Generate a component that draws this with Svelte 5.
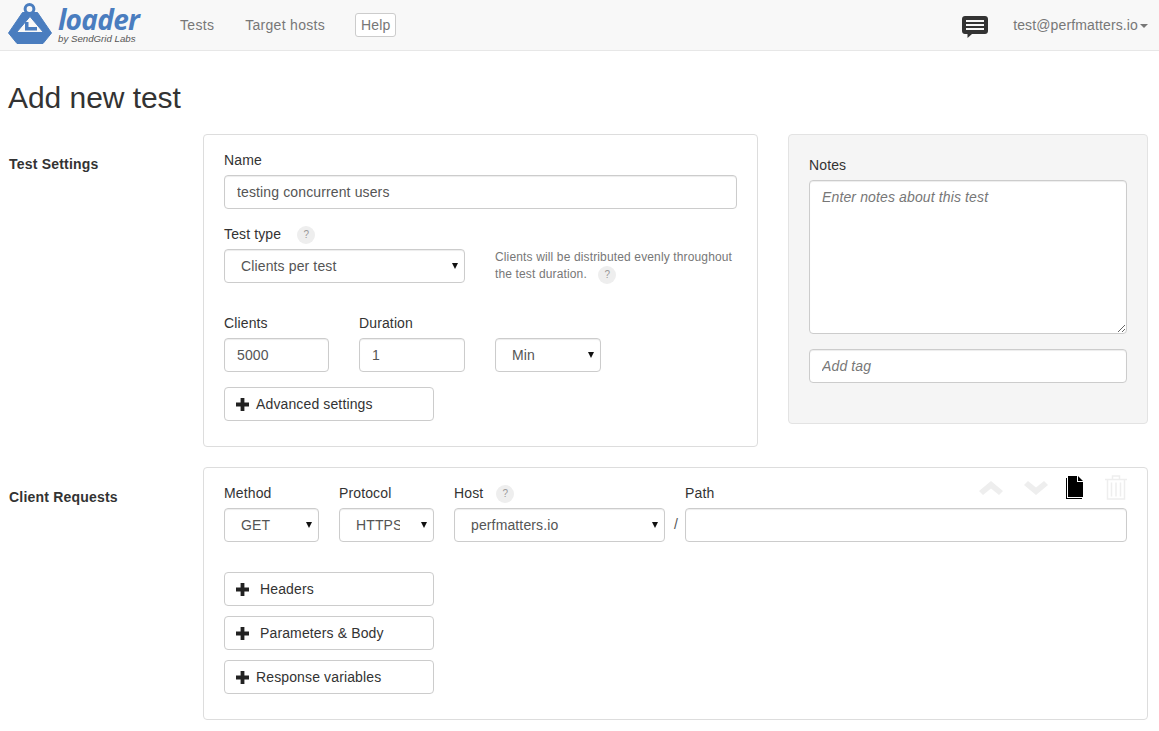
<script lang="ts">
	const plusButtons = [
		{ label: 'Headers', wide: true },
		{ label: 'Parameters & Body', wide: true },
		{ label: 'Response variables', wide: false }
	];
</script>

{#snippet help()}
	<span class="help">?</span>
{/snippet}

{#snippet plus()}
	<svg class="plus" viewBox="0 0 13 13" width="13" height="13" aria-hidden="true">
		<path d="M4.6 0h3.8v4.6H13v3.8H8.4V13H4.6V8.4H0V4.6h4.6z" />
	</svg>
{/snippet}

<header class="navbar">
	<a class="brand" href="#top">
		<svg class="logo" viewBox="8 0 44 46" width="44" height="46" aria-hidden="true">
			<circle cx="29.5" cy="9" r="4.4" fill="none" stroke="#4a7dbf" stroke-width="3" />
			<path
				fill="#4a7dbf"
				fill-rule="evenodd"
				stroke="#4a7dbf"
				stroke-width="1"
				stroke-linejoin="round"
				d="M22.500 12.500h15L51.500 33 43 43.500H17L8.500 33zM30 16.500L16.500 32.500h27z"
			/>
			<path fill="#4a7dbf" d="M25 22h3.500v5H37v3.500H25z" />
		</svg>
		<span class="brand-text">
			<span class="brand-name">loader</span>
			<span class="brand-by">by SendGrid Labs</span>
		</span>
	</a>
	<nav class="nav-links">
		<a href="#tests">Tests</a>
		<a href="#hosts">Target hosts</a>
		<a class="help-link" href="#help">Help</a>
	</nav>
	<div class="nav-right">
		<svg class="chat" viewBox="0 0 26 22" width="26" height="22" aria-hidden="true">
			<path
				fill="#333"
				fill-rule="evenodd"
				d="M3 0h20c1.700 0 3 1.300 3 3v12c0 1.700-1.300 3-3 3H10l-4.500 4v-4H3c-1.700 0-3-1.300-3-3V3c0-1.700 1.300-3 3-3zM4 4v2h18V4zM4 8v2h18V8zM4 12v2h18v-2z"
			/>
		</svg>
		<a class="user" href="#user">test@perfmatters.io<span class="caret"></span></a>
	</div>
</header>

<main class="page">
	<h1>Add new test</h1>

	<section class="row first">
		<h2>Test Settings</h2>
		<div class="settings-cols">
			<div class="card settings">
				<label class="field">
					<span class="label">Name</span>
					<input class="control" type="text" value="testing concurrent users" />
				</label>

				<div class="label type-label">Test type {@render help()}</div>
				<div class="type-row">
					<div class="select type-select">
						<select class="control"><option>Clients per test</option></select>
					</div>
					<p class="hint">
						Clients will be distributed evenly throughout the test duration.
						{@render help()}
					</p>
				</div>

				<div class="load-row">
					<label class="load-field">
						<span class="label">Clients</span>
						<input class="control" type="text" value="5000" />
					</label>
					<label class="load-field">
						<span class="label">Duration</span>
						<input class="control" type="text" value="1" />
					</label>
					<div class="select unit-select">
						<select class="control"><option>Min</option></select>
					</div>
				</div>

				<button class="plus-btn" type="button">{@render plus()}<span>Advanced settings</span></button>
			</div>

			<aside class="well">
				<label class="notes-label" for="notes">Notes</label>
				<textarea id="notes" class="control notes" placeholder="Enter notes about this test"></textarea>
				<input class="control tag" type="text" placeholder="Add tag" />
			</aside>
		</div>
	</section>

	<section class="row">
		<h2>Client Requests</h2>
		<div class="card requests">
			<div class="tools">
				<svg viewBox="0 0 24 14" width="24" height="14" aria-hidden="true">
					<path fill="#eee" d="M12 0l12 10-4 4-8-6.500L4 14l-4-4z" />
				</svg>
				<svg viewBox="0 0 24 14" width="24" height="14" aria-hidden="true">
					<path fill="#eee" d="M12 14L0 4l4-4 8 6.500L20 0l4 4z" />
				</svg>
				<svg class="doc" viewBox="0 0 18 23" width="18" height="23" aria-hidden="true">
					<path fill="#000" d="M2 0h9v6h6v15H2z" />
					<path fill="#000" d="M12 0l5 5h-5zM0 2h1v20h15v1H0z" />
				</svg>
				<svg viewBox="0 0 22 25" width="22" height="25" aria-hidden="true">
					<path
						fill="none"
						stroke="#eee"
						stroke-width="1.500"
						d="M0 4.500h22M7.500 4V1h7v3M2.500 5v19h17V5M6.500 7.500v14M11 7.500v14M15.500 7.500v14"
					/>
				</svg>
			</div>

			<div class="request-row">
				<div class="col col-method">
					<span class="label">Method</span>
					<div class="select"><select class="control"><option>GET</option></select></div>
				</div>
				<div class="col col-method">
					<span class="label">Protocol</span>
					<div class="select"><select class="control"><option>HTTPS</option></select></div>
				</div>
				<div class="col col-host">
					<span class="label">Host {@render help()}</span>
					<div class="select"><select class="control"><option>perfmatters.io</option></select></div>
				</div>
				<span class="slash">/</span>
				<div class="col col-path">
					<span class="label">Path</span>
					<input class="control" type="text" />
				</div>
			</div>

			<div class="plus-list">
				{#each plusButtons as item}
					<button class="plus-btn" class:wide={item.wide} type="button">
						{@render plus()}<span>{item.label}</span>
					</button>
				{/each}
			</div>
		</div>
	</section>
</main>

<style>
	:global(body) {
		margin: 0;
		background: #fff;
		color: #333;
		font-family: 'Liberation Sans', Arial, sans-serif;
		font-size: 14px;
		line-height: 20px;
		letter-spacing: 0.13px;
	}

	.navbar {
		display: flex;
		align-items: center;
		height: 50px;
		background: #f8f8f8;
		border-bottom: 1px solid #e7e7e7;
	}

	.brand {
		display: flex;
		margin-left: 8px;
		height: 50px;
		text-decoration: none;
	}

	.brand-text {
		display: flex;
		flex-direction: column;
		width: 82px;
		margin-left: 6px;
		padding-top: 6px;
	}

	.brand-name {
		font-family: 'Open Sans', sans-serif;
		font-size: 28px;
		font-style: italic;
		font-weight: 700;
		line-height: 27px;
		letter-spacing: -0.7px;
		color: #4a7dbf;
	}

	.brand-by {
		font-size: 9.7px;
		font-style: italic;
		line-height: 11px;
		letter-spacing: 0;
		white-space: nowrap;
		color: #555;
	}

	.nav-links {
		display: flex;
		align-items: center;
		gap: 31px;
		margin-left: 40px;
		letter-spacing: 0.3px;
	}

	.nav-links a {
		color: #777;
		text-decoration: none;
	}

	.nav-links .help-link {
		margin-left: -1px;
		padding: 1px 5px;
		border: 1px solid #ccc;
		border-radius: 3px;
		background: #fff;
		letter-spacing: 0.13px;
	}

	.nav-right {
		display: flex;
		align-items: center;
		margin-left: auto;
		margin-right: 11px;
	}

	.chat {
		margin: 3px 25px 0 0;
	}

	.user {
		color: #777;
		text-decoration: none;
	}

	.caret {
		display: inline-block;
		margin-left: 2px;
		vertical-align: middle;
		border-top: 4px solid #777;
		border-left: 4px solid transparent;
		border-right: 4px solid transparent;
	}

	.page {
		padding: 0 11px 0 8px;
	}

	h1 {
		margin: 27px 0 16px;
		font-size: 30px;
		font-weight: 400;
		line-height: 40px;
		letter-spacing: -0.05px;
	}

	.row {
		display: grid;
		grid-template-columns: 195px 1fr;
		margin-top: 20px;
	}

	.row.first {
		margin-top: 0;
	}

	h2 {
		margin: 20px 0 0 1px;
		font-size: 14px;
		font-weight: 700;
		line-height: 20px;
		letter-spacing: 0.2px;
	}

	.settings-cols {
		display: flex;
		align-items: flex-start;
		gap: 30px;
	}

	.card {
		position: relative;
		box-sizing: border-box;
		background: #fff;
		border: 1px solid #ddd;
		border-radius: 4px;
	}

	.settings {
		width: 555px;
		height: 313px;
		padding: 15px 20px 0;
	}

	.requests {
		height: 253px;
		padding: 15px 20px 0;
	}

	.well {
		box-sizing: border-box;
		width: 360px;
		height: 290px;
		padding: 20px;
		background: #f5f5f5;
		border: 1px solid #e3e3e3;
		border-radius: 4px;
	}

	.label {
		display: block;
		height: 20px;
		color: #333;
		margin-bottom: 5px;
	}

	.control {
		display: block;
		box-sizing: border-box;
		width: 100%;
		height: 34px;
		padding: 6px 12px;
		background: #fff;
		border: 1px solid #ccc;
		border-radius: 4px;
		color: #555;
		font: inherit;
		letter-spacing: inherit;
		box-shadow: inset 0 1px 1px rgba(0, 0, 0, 0.075);
	}

	.control::placeholder {
		color: #777;
		font-style: italic;
		opacity: 1;
	}

	.field {
		display: block;
	}

	.type-label {
		margin-top: 15px;
		margin-bottom: 5px;
	}

	.help {
		display: inline-block;
		width: 18px;
		height: 18px;
		margin-left: 9px;
		border-radius: 50%;
		background: #eee;
		color: #999;
		font-size: 10px;
		line-height: 18px;
		letter-spacing: 0;
		text-align: center;
		vertical-align: 1px;
	}

	.type-label .help {
		margin-left: 12px;
	}

	.type-row {
		display: flex;
		gap: 30px;
	}

	.type-select {
		flex: 0 0 241px;
	}

	.hint {
		margin: 0;
		color: #777;
		font-size: 12px;
		line-height: 17px;
		letter-spacing: 0.14px;
		width: 242px;
	}

	.hint .help {
		margin: -2px 0 -2px 8px;
		vertical-align: 0;
	}

	.select {
		position: relative;
	}

	.select::after {
		content: '';
		position: absolute;
		top: 14px;
		right: 7px;
		border-top: 6px solid #111;
		border-left: 3.5px solid transparent;
		border-right: 3.5px solid transparent;
	}

	.select select {
		appearance: none;
		padding: 6px 33px 6px 16px;
	}

	.load-row {
		display: flex;
		align-items: flex-end;
		gap: 30px;
		margin-top: 30px;
	}

	.load-field {
		display: block;
		width: 105px;
	}

	.load-field + .load-field {
		width: 106px;
	}

	.unit-select {
		width: 106px;
	}

	.plus-btn {
		display: flex;
		align-items: center;
		box-sizing: border-box;
		width: 210px;
		height: 34px;
		margin: 15px 0 0;
		padding: 0 11px;
		background: #fff;
		border: 1px solid #ccc;
		border-radius: 4px;
		color: #333;
		font: inherit;
		letter-spacing: inherit;
		text-align: left;
	}

	.plus-btn span {
		margin-left: 7px;
	}

	.plus-btn.wide span {
		margin-left: 11px;
	}

	.plus {
		flex: none;
		fill: #222;
	}

	.notes-label {
		display: block;
		margin-bottom: 5px;
	}

	.notes {
		height: 154px;
		resize: vertical;
	}

	.tag {
		margin-top: 15px;
	}

	.tools {
		position: absolute;
		top: 7px;
		right: 20px;
		display: flex;
		align-items: center;
		gap: 21px;
	}

	.tools .doc {
		margin-left: -3px;
	}

	.request-row {
		display: flex;
		align-items: flex-end;
	}

	.col-method {
		flex: 0 0 95px;
		margin-right: 20px;
	}

	.col-host {
		flex: 0 0 211px;
	}

	.col-path {
		flex: 1;
	}

	.slash {
		box-sizing: border-box;
		width: 20px;
		height: 34px;
		padding-left: 2px;
		line-height: 32px;
		text-align: center;
		color: #555;
	}

	.plus-list {
		display: flex;
		flex-direction: column;
		margin-top: 30px;
		gap: 10px;
	}

	.plus-list .plus-btn {
		margin: 0;
	}
</style>
